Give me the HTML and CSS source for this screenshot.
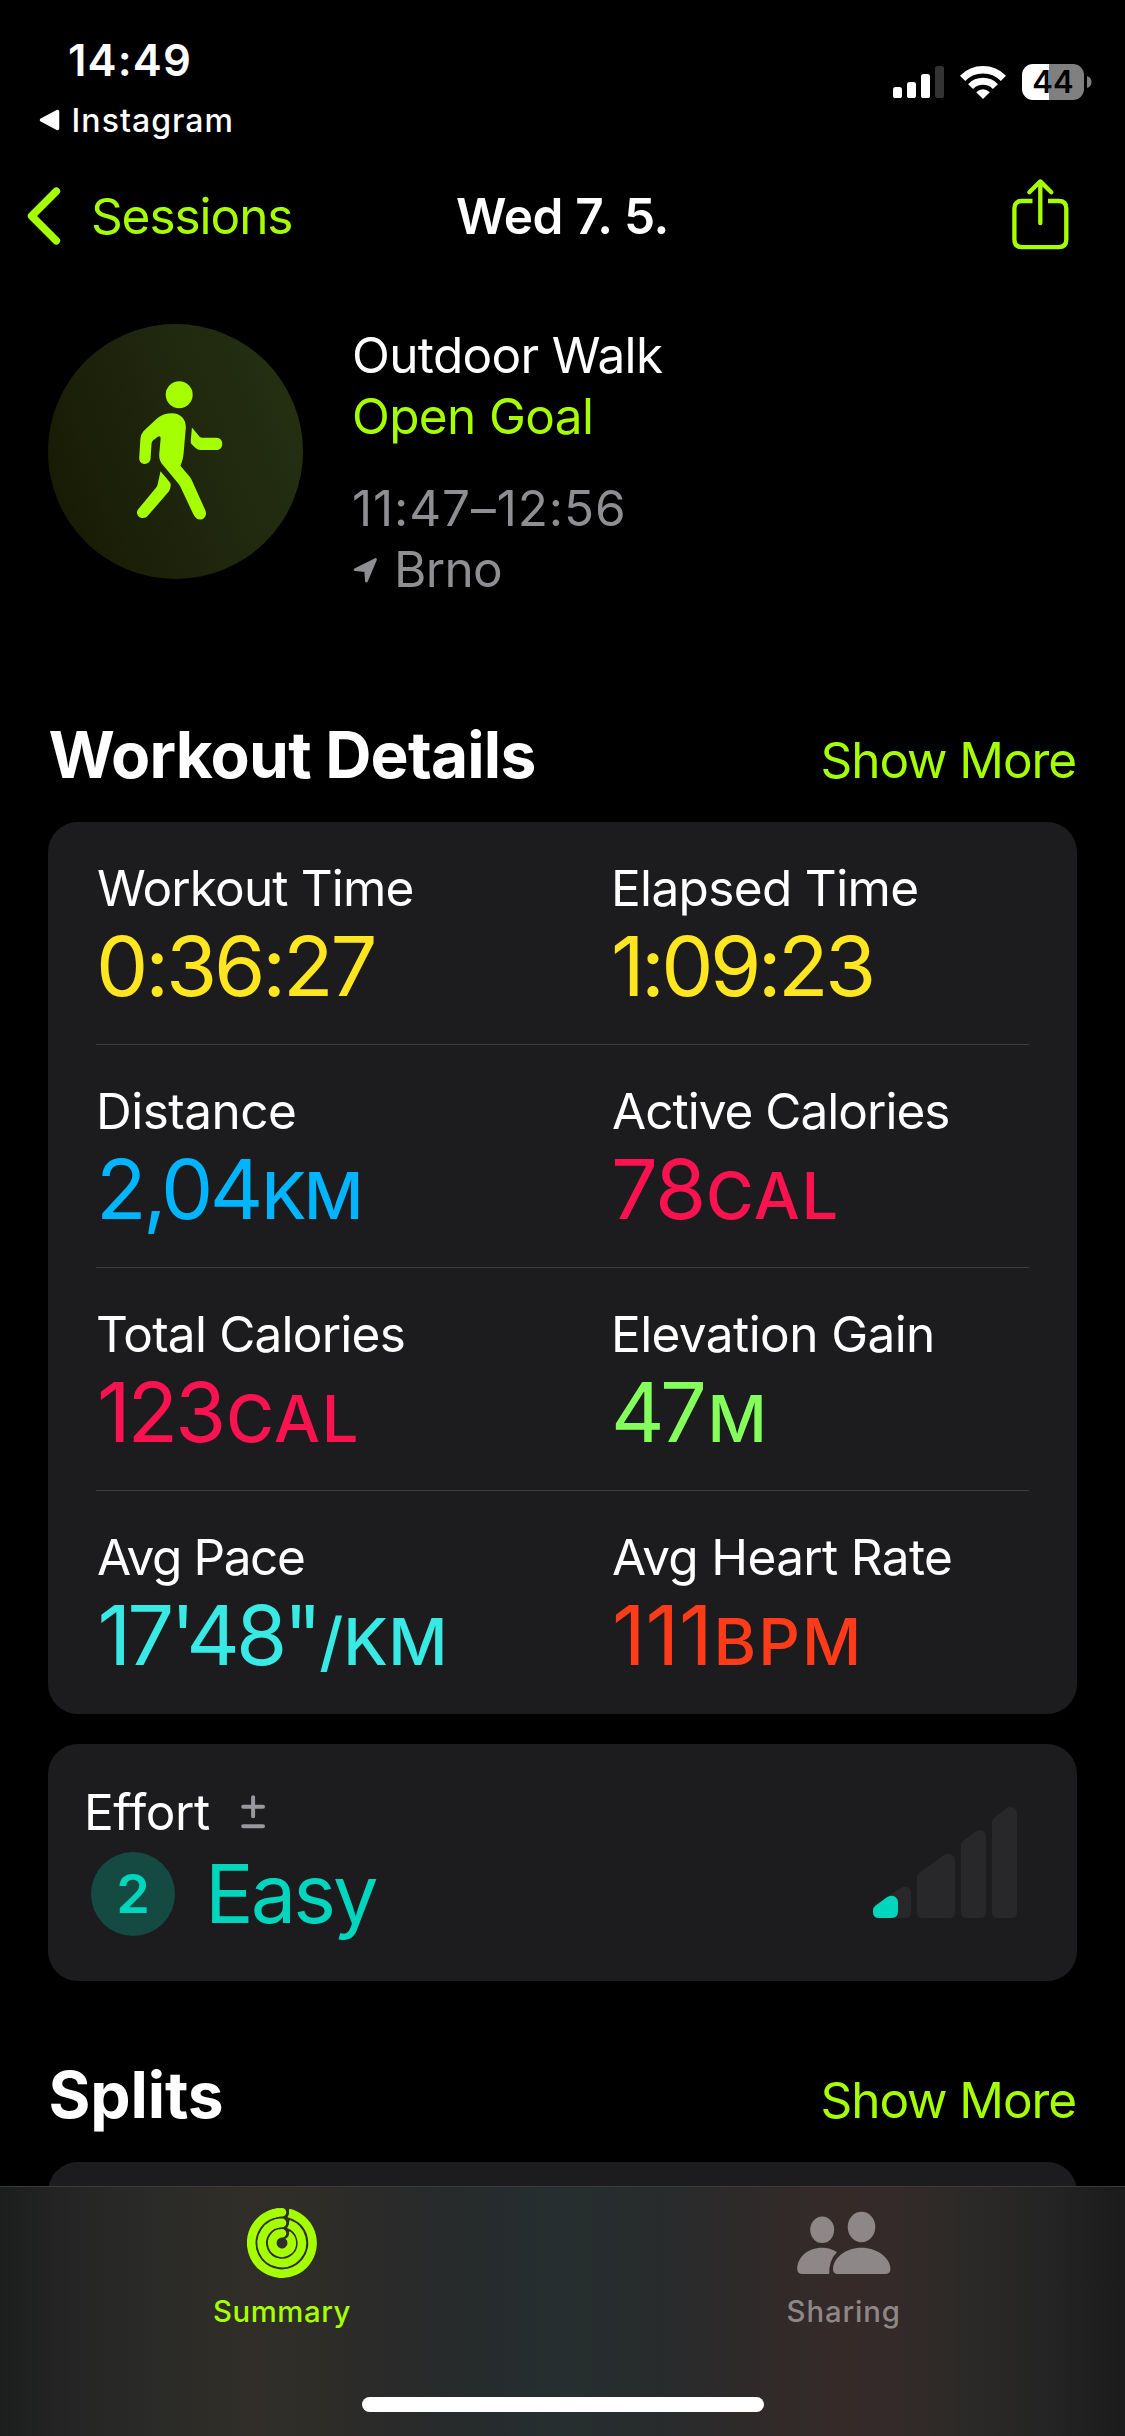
FILE: index.html
```
<!DOCTYPE html>
<html lang="en">
<head>
<meta charset="utf-8">
<title>Wed 7. 5.</title>
<link rel="stylesheet" href="styles.css">
</head>
<body>
<div class="screen">
  <main class="content">
    <div class="status">
      <div class="status-left">
        <div class="clock">14:49</div>
        <div class="return-app">
          <svg width="21" height="22" viewBox="0 0 21 22"><path d="M18.5 2.5v17L2.5 11z" fill="#fff" stroke="#fff" stroke-width="3.5" stroke-linejoin="round"/></svg>
          <span>Instagram</span>
        </div>
      </div>
      <div class="status-right">
        <svg class="signal" width="51" height="32" viewBox="0 0 51 32">
          <rect x="0" y="21" width="9" height="11" rx="2.6" fill="#fff"/>
          <rect x="14" y="16" width="9" height="16" rx="2.6" fill="#fff"/>
          <rect x="28" y="8" width="9" height="24" rx="2.6" fill="#fff"/>
          <rect x="42" y="0" width="9" height="32" rx="2.6" fill="#333"/>
        </svg>
        <svg class="wifi" width="46" height="33" viewBox="0 0 46 33" fill="none" stroke="#fff">
          <path d="M2.6 12.3A28.5 28.5 0 0 1 43.4 12.3" stroke-width="7.4"/>
          <path d="M10.6 20.6A17.3 17.3 0 0 1 35.4 20.6" stroke-width="7"/>
          <path d="M23 33L16.2 26.2Q23 20.4 29.8 26.2Z" fill="#fff" stroke="none"/>
        </svg>
        <div class="battery"><span>44</span></div>
        <svg class="battery-cap" width="5" height="12" viewBox="0 0 5 12"><path d="M0 0Q4.5 1.5 4.5 6T0 12z" fill="#808080"/></svg>
      </div>
    </div>

    <nav class="navbar">
      <a class="back">
        <svg width="34" height="58" viewBox="0 0 34 58"><path d="M29.3 4.2L4.6 29L29.3 53.8" fill="none" stroke="#a6ff00" stroke-width="7.6" stroke-linecap="round" stroke-linejoin="round"/></svg>
        <span>Sessions</span>
      </a>
      <h1 class="title">Wed 7. 5.</h1>
      <svg class="share" width="57" height="72" viewBox="0 0 57 72" fill="none" stroke="#a6ff00" stroke-width="4.3">
        <path d="M20.5 23H10Q2.4 23 2.4 30.6V61.6Q2.4 69.2 10 69.2H46.7Q54.3 69.2 54.3 61.6V30.6Q54.3 23 46.7 23H36"/>
        <path d="M28.3 45.2V4M17.3 14.2L28.3 3.4L39.3 14.2" stroke-linecap="round" stroke-linejoin="round"/>
      </svg>
    </nav>

    <section class="hero">
      <div class="hero-badge">
        <svg width="255" height="255" viewBox="0 0 255 255" fill="#a6ff00">
          <circle cx="131.2" cy="70.7" r="13.5"/>
          <path d="M124.2 89.3C132.5 89.3 138.2 95 137.8 104L135.8 127C135.4 133 134.4 137.5 132.4 141.7L141.5 152.5Q143.6 155 144.6 158L157.4 186.5C160 193 153.5 197.6 148.5 194.6Q146.5 193 145 189.6L133 164Q132 161.5 130.5 159.8L114.5 140.5Q111 136.5 111.2 130.5L112.6 115Q112.8 111 109.8 112.8L105 116.5Q103.6 117.8 103.5 120L102.6 134.6C102.2 141.8 91 141.8 91.2 134L92.4 115Q92.6 110.5 95.6 107L109 94.5Q115 89.3 124.2 89.3Z"/>
          <path d="M143.9 103.6L151.4 112.4Q152.6 113.7 154.6 113.7H168.6C176.2 113.7 176.2 126 168.6 126H152.5Q149.6 126 147.6 124L143.6 120.2Q142.6 119.2 142.7 117.4Z"/>
          <path d="M112.5 147.3L122 158.4Q123 159.8 122.7 161.8Q122.4 165 120.8 167.4L100 191.6C95 197.6 86 191.6 90 185.6L108.2 163.6Q109.4 162 109.8 159.8Z"/>
        </svg>
      </div>
      <div class="hero-text">
        <div class="hero-name">Outdoor Walk</div>
        <div class="hero-goal">Open Goal</div>
        <div class="hero-time">11:47–12:56</div>
        <div class="hero-place">
          <svg width="25" height="27" viewBox="0 0 25 27"><path d="M22.6 2.4L2 12.6L12.6 13.6L13.4 24.2Z" fill="#8e8e93" stroke="#8e8e93" stroke-width="2.6" stroke-linejoin="round"/></svg>
          <span>Brno</span>
        </div>
      </div>
    </section>

    <header class="section-head">
      <h2>Workout Details</h2>
      <a class="more">Show More</a>
    </header>

    <section class="card details">
      <div class="row">
        <div class="metric workout-time"><div class="label">Workout Time</div><div class="value">0:36:27</div></div>
        <div class="metric elapsed-time"><div class="label">Elapsed Time</div><div class="value">1:09:23</div></div>
      </div>
      <div class="row">
        <div class="metric distance"><div class="label">Distance</div><div class="value">2,04<span class="unit">KM</span></div></div>
        <div class="metric active-cal"><div class="label">Active Calories</div><div class="value">78<span class="unit">CAL</span></div></div>
      </div>
      <div class="row">
        <div class="metric total-cal"><div class="label">Total Calories</div><div class="value">123<span class="unit">CAL</span></div></div>
        <div class="metric elevation"><div class="label">Elevation Gain</div><div class="value">47<span class="unit">M</span></div></div>
      </div>
      <div class="row">
        <div class="metric pace"><div class="label">Avg Pace</div><div class="value">17'48"<span class="unit">/KM</span></div></div>
        <div class="metric heart"><div class="label">Avg Heart Rate</div><div class="value">111<span class="unit">BPM</span></div></div>
      </div>
    </section>

    <section class="card effort">
      <div class="effort-main">
        <div class="effort-head">
          <span>Effort</span>
          <svg width="25" height="34" viewBox="0 0 25 34" fill="none" stroke="#98989e" stroke-width="4" stroke-linecap="round"><path d="M2.2 11.8H22M12.1 2.3V21.3M2.2 31.2H22"/></svg>
        </div>
        <div class="effort-level">
          <span class="effort-score">2</span>
          <span class="effort-name">Easy</span>
        </div>
      </div>
      <svg class="effort-bars" width="144" height="111" viewBox="0 0 144 111" fill="#28282a">
        <path d="M0 106V101Q0 98.6 2 97L28 81Q32 78.6 35 80.4Q38 82 38 86V105Q38 111 32 111H5Q0 111 0 106Z"/>
        <path d="M44 70Q44 67.6 46 66L71 48Q75 45.6 79 47.6Q82 49.8 82 53V105Q82 111 76 111H50Q44 111 44 105Z"/>
        <path d="M88 38Q88 35.6 90 34L102.5 24.6Q106.5 22 110 24Q113 26 113 29.6V105Q113 111 107 111H94Q88 111 88 105Z"/>
        <path d="M119 15Q119 12.6 121 11L133 1.6Q137 -1.2 141 1Q144 3 144 6.6V105Q144 111 138 111H125Q119 111 119 105Z"/>
        <path d="M0 105V103.4Q0 100.6 2.4 98.8L13.6 90.4Q17.6 87.6 21.6 89.4Q25 91.4 25 95.4V104.5Q25 111 18.5 111H6Q0 111 0 105Z" fill="#00d6bd"/>
      </svg>
    </section>

    <header class="section-head splits-head">
      <h2>Splits</h2>
      <a class="more">Show More</a>
    </header>
    <section class="card splits"></section>
  </main>

  <footer class="tabbar">
    <div class="tabs">
      <a class="tab tab-active">
        <svg width="70" height="70" viewBox="-35 -35 70 70" fill="none" stroke="#a6ff00" stroke-width="8.6">
          <path d="M6.4 -30A30.7 30.7 0 1 1 0 -30.7"/>
          <path d="M6.4 -19A20.1 20.1 0 1 1 0 -20.1"/>
          <path d="M5.4 -8.2A9.8 9.8 0 1 1 0 -9.8"/>
          <g fill="#2f2e27" stroke="none"><circle cx="1.2" cy="-30.3" r="5.9"/><circle cx="1.2" cy="-19.9" r="5.9"/><circle cx="1.2" cy="-9.7" r="5.9"/></g>
          <g stroke-linecap="round"><path d="M-8 -29.64A30.7 30.7 0 0 1 0 -30.7"/><path d="M-6 -19.18A20.1 20.1 0 0 1 0 -20.1"/><path d="M-5 -8.4A9.8 9.8 0 0 1 0 -9.8"/></g>
        </svg>
        <span>Summary</span>
      </a>
      <a class="tab">
        <svg width="94" height="70" viewBox="0 0 94 70" fill="#8d8887">
          <ellipse cx="25.2" cy="21.8" rx="12" ry="13.2"/>
          <ellipse cx="64.5" cy="19" rx="13.8" ry="15.2"/>
          <path d="M25.2 39.7Q33 39.7 40 44Q31.8 52.4 32.2 66H5.5Q.2 66 .2 61C.2 50 10 39.7 25.2 39.7Z"/>
          <path d="M64.5 39.7C80 39.7 93.4 50 93.4 61Q93.4 66 88 66H41Q36 66 36 61C36 50 49 39.7 64.5 39.7Z"/>
        </svg>
        <span>Sharing</span>
      </a>
    </div>
    <div class="home-indicator"></div>
  </footer>
</div>
</body>
</html>
```
FILE: styles.css
```
* { box-sizing: border-box; margin: 0; padding: 0; }

body {
  background: #000;
  color: #fff;
  font-family: Inter, "Liberation Sans", sans-serif;
}

svg { display: block; flex: none; }

.screen {
  width: 1125px;
  height: 2436px;
  display: flex;
  flex-direction: column;
  overflow: hidden;
}

.content { height: 2186px; overflow: hidden; font-size: 49.5px; line-height: 60px; letter-spacing: -0.65px; white-space: nowrap; }

/* status bar */
.status { height: 176px; display: flex; justify-content: space-between; }
.status-left { padding: 35px 0 0 39px; }
.clock { padding-left: 29px; font-size: 43.6px; line-height: 52px; font-weight: 600; letter-spacing: 1.15px; }
.return-app { margin-top: 14px; display: flex; align-items: center; gap: 11.6px; font-size: 32px; line-height: 40px; font-weight: 500; letter-spacing: 1.04px; }
.return-app svg { margin-top: -2px; }
.status-right { height: 36px; margin-top: 64px; padding-right: 33px; display: flex; align-items: center; }
.wifi { margin-left: 16px; }
.battery {
  width: 62px;
  height: 36px;
  margin-left: 16px;
  border-radius: 11px;
  background: linear-gradient(90deg, #fff 27px, #808080 27px);
  color: #000;
  font-size: 31px;
  line-height: 36px;
  font-weight: 600;
  letter-spacing: 0;
  text-align: center;
}
.battery-cap { margin-left: 3px; }

/* navigation bar */
.navbar { height: 80px; padding: 0 56px 0 28px; display: grid; grid-template-columns: 428px 1fr auto; align-items: center; }
.back { display: flex; align-items: center; gap: 29.5px; color: #a6ff00; letter-spacing: -1.05px; }
.back svg { margin-left: -0.6px; }
.title { font-size: 49.5px; font-weight: 600; letter-spacing: -0.33px; }
.share { margin-top: -4px; }

/* workout summary */
.hero { margin-top: 68px; padding-left: 48px; height: 275px; display: flex; gap: 49px; line-height: 61px; }
.hero-badge { width: 255px; height: 255px; border-radius: 50%; background: linear-gradient(70deg, #171a02 5%, #1f260d 50%, #253012 95%); }
.hero-text { padding-top: 0.6px; }
.hero-goal { color: #a6ff00; }
.hero-time { margin-top: 31px; color: #8e8e93; letter-spacing: 0.9px; }
.hero-place { display: flex; align-items: center; gap: 16px; color: #8e8e93; }
.hero-place svg { margin-left: 1px; margin-top: 2px; }

/* section headings */
.section-head { height: 78px; margin: 117px 49px 0 48.5px; display: flex; justify-content: space-between; align-items: baseline; line-height: 78px; }
.section-head h2 { font-size: 64px; font-weight: 700; letter-spacing: -0.78px; }
.more { color: #a6ff00; letter-spacing: -1.1px; }
.splits-head { margin-top: 75px; }
.splits-head h2 { letter-spacing: -0.12px; }

.card { margin: 28px 48px 0; border-radius: 30px; background: #1c1c1e; }

/* metric grid */
.details { padding: 0 48px; }
.row { height: 223px; padding-top: 37px; display: grid; grid-template-columns: 515px 1fr; border-bottom: 1px solid #3d3d40; }
.row:last-child { border-bottom: 0; }
.label { line-height: 58px; }
.value { font-size: 83px; line-height: 98px; font-weight: 400; }
.unit { font-size: 65px; font-weight: 500; line-height: 1; }

.workout-time .label { padding-left: 1px; letter-spacing: -0.84px; }
.workout-time .value { color: #ffe620; letter-spacing: -3.19px; }
.elapsed-time .value { color: #ffe620; letter-spacing: -3.69px; }
.distance .label { letter-spacing: -0.51px; }
.distance .value { color: #00b5ff; letter-spacing: -3.66px; }
.distance .unit { margin-left: 2px; letter-spacing: -2.39px; }
.active-cal .label { padding-left: 1px; letter-spacing: -0.99px; }
.active-cal .value { color: #fc124f; letter-spacing: -1.8px; }
.active-cal .unit { margin-left: 1.5px; letter-spacing: 1.54px; }
.total-cal .label { letter-spacing: -0.78px; }
.total-cal .value { padding-left: 1px; color: #fc124f; letter-spacing: -3.14px; }
.total-cal .unit { margin-left: 3px; letter-spacing: 1.54px; }
.elevation .label { letter-spacing: -0.59px; }
.elevation .value { color: #84ff5c; letter-spacing: -4.6px; }
.elevation .unit { margin-left: 5px; }
.pace .label { padding-left: 1px; letter-spacing: -1.37px; }
.pace .value { padding-left: 1.5px; color: #38e9e4; letter-spacing: -3.9px; }
.pace .unit { margin-left: 1px; letter-spacing: 0.14px; }
.heart .label { padding-left: 1px; letter-spacing: -0.65px; }
.heart .value { padding-left: 1px; color: #ff3b1a; letter-spacing: -0.26px; }
.heart .unit { margin-left: 1px; letter-spacing: 2.05px; }

/* effort */
.effort { height: 237px; margin-top: 30px; padding: 0 60px 0 36px; display: flex; justify-content: space-between; align-items: center; }
.effort-main { align-self: flex-start; padding-top: 38px; }
.effort-head { display: flex; align-items: center; gap: 31px; letter-spacing: -0.4px; }
.effort-level { margin: 3px 0 0 7px; display: flex; align-items: center; gap: 30px; line-height: 98px; color: #00d6bd; }
.effort-score { width: 84px; height: 84px; border-radius: 50%; background: #154a43; font-size: 54px; line-height: 84px; font-weight: 600; letter-spacing: 0; text-align: center; }
.effort-name { font-size: 81px; letter-spacing: -3px; }

.splits { height: 200px; }

/* tab bar */
.tabbar {
  height: 250px;
  border-top: 1px solid #3c3c3e;
  display: flex;
  flex-direction: column;
  align-items: center;
  background: linear-gradient(90deg, #1c1e1d 0, #252525 70px, #2a2a28 150px, #302e27 250px, #2e2d28 310px, #2a2a2a 390px, #262b2c 480px, #262f2f 560px, #282b2c 660px, #2d2a2a 730px, #362a29 840px, #332a29 900px, #2c2a28 960px, #242424 1050px, #1b1b1b 1125px);
}
.tabs { width: 100%; height: 210px; padding-top: 21px; display: grid; grid-template-columns: 1fr 1fr; }
.tab { display: flex; flex-direction: column; align-items: center; gap: 16px; color: #8d8887; font-size: 29.3px; line-height: 36px; font-weight: 500; letter-spacing: 0.9px; }
.tab-active { padding-left: 1.5px; color: #a6ff00; letter-spacing: 0.61px; }
.home-indicator { width: 402px; height: 15px; border-radius: 8px; background: #fff; }
```
